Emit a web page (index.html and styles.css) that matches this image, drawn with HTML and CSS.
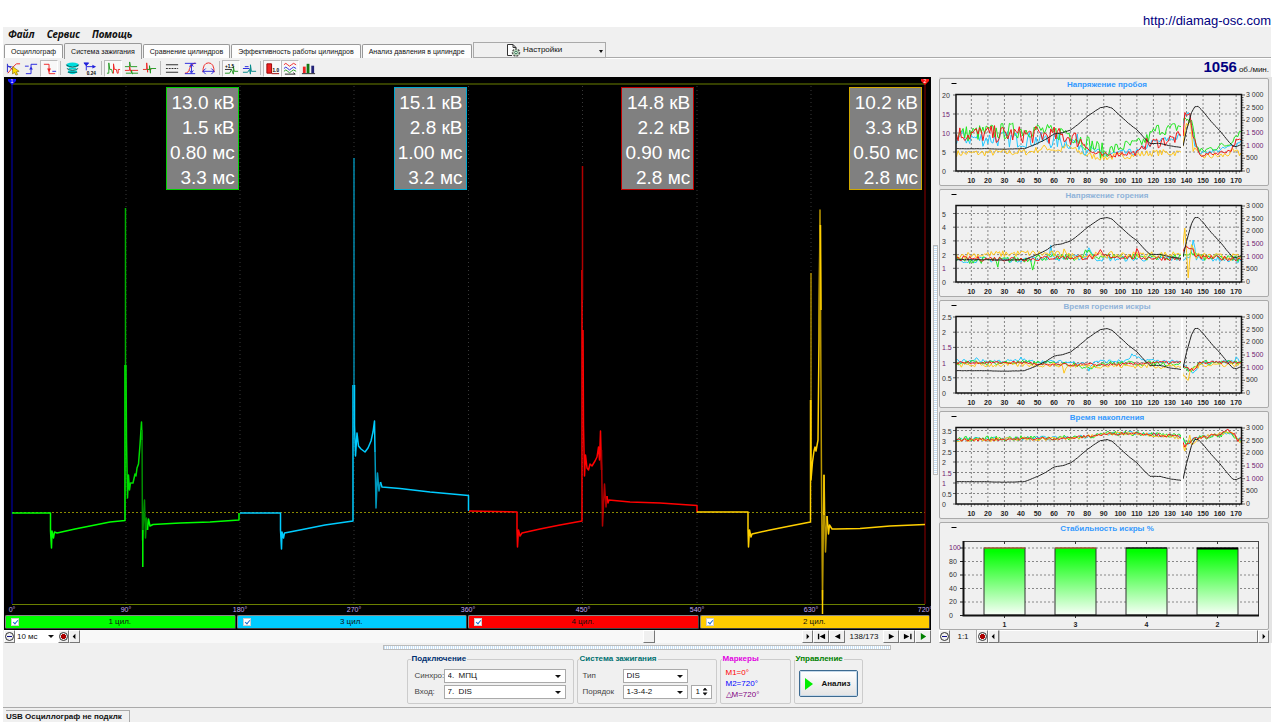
FILE: index.html
```html
<!DOCTYPE html>
<html lang="ru">
<head>
<meta charset="utf-8">
<title>Система зажигания</title>
<link rel="stylesheet" href="styles.css">
</head>
<body>
<header class="site"><a href="http://diamag-osc.com">http://diamag-osc.com</a></header>
<div class="app">
  <nav class="menubar">
    <button>Файл</button><button>Сервис</button><button>Помощь</button>
  </nav>
  <div class="tabs">
    <button class="tab">Осциллограф</button>
    <button class="tab active">Система зажигания</button>
    <button class="tab">Сравнение цилиндров</button>
    <button class="tab">Эффективность работы цилиндров</button>
    <button class="tab">Анализ давления в цилиндре</button>
    <button class="settings">
      <svg width="15" height="14" viewBox="0 0 15 14"><path d="M6 12.500H1.500V1.500H7l3 3v1M7 1.500v3h3" fill="#fff" stroke="#333"/><circle cx="10" cy="9.500" r="3.500" fill="#c8e0c8" stroke="#555" stroke-width="1.500" stroke-dasharray="2 1"/><circle cx="10" cy="9.500" r="1.300" fill="#fff" stroke="#375"/></svg>
      <span>Настройки</span><i class="caret"></i>
    </button>
    <div class="tab-rest"></div>
  </div>
  <div class="toolbar">
    <button aria-label="Маркер"><svg viewBox="0 0 16 16"><path d="M1.500 3v9M2 5l9 7M2 6h4" stroke="#22c" fill="none"/><path d="M2 13L7 7l4-4h4" stroke="#e22" fill="none"/><path d="M7 6l7 5-3 .5 1.500 3-2 .5-1.500-3-2 2z" fill="#fd0" stroke="#750" stroke-width=".6"/></svg></button>
    <button aria-label="Фронт"><svg viewBox="0 0 16 16"><path d="M2 13.500h5.500V3.500H14M1 5.500h4" stroke="#22d" fill="none"/><path d="M5.500 9h4l-2-3z" fill="#22d"/></svg></button>
    <button class="on" aria-label="Спад"><svg viewBox="0 0 16 16"><path d="M2 3.500h5.500v10H14" stroke="#e22" fill="none"/><path d="M5.500 8h4l-2 4z" fill="#e22"/><path d="M11 11h4" stroke="#22d"/></svg></button>
    <i class="sep"></i>
    <button aria-label="Масштаб"><svg viewBox="0 0 16 16"><path d="M2 3q6-3 12 0v3H2zM4 7h8v3H4zM3 12q5 4 10 0l-1-3H4z" fill="#0dd"/><path d="M1 4q7 5 14 0M2 8q6 4 12 0M3 12h10" stroke="#055" fill="none"/></svg></button>
    <button aria-label="Время"><svg viewBox="0 0 16 16"><path d="M1 2h5L3.500 5zM3.500 4v6M4 6h8" fill="#22d" stroke="#22d"/><path d="M10 4l4 2-4 2z" fill="#22d"/><text x="4" y="15" class="tiny">0.24</text></svg></button>
    <i class="sep"></i>
    <button class="on" aria-label="Парад"><svg viewBox="0 0 16 16"><path d="M1 13h2V2l1 7h2l1 4" stroke="#292" fill="none"/><path d="M7 13h1V3l1 6h2l1 4h1V9h2" stroke="#e22" fill="none"/></svg></button>
    <button aria-label="Растр"><svg viewBox="0 0 16 16"><path d="M1 6h5V1l1 5h7" stroke="#292" fill="none"/><path d="M1 10h5V6l1 5v-1h8" stroke="#e22" fill="none"/><path d="M2 13h6v-3l1 4v-1h6" stroke="#292" fill="none"/></svg></button>
    <button aria-label="Наложение"><svg viewBox="0 0 16 16"><path d="M1 9h4V2l1 10V9h4" stroke="#e22" fill="none"/><path d="M5 9h3V5l1 8V8h6" stroke="#292" fill="none"/></svg></button>
    <i class="sep"></i>
    <button aria-label="Линии"><svg viewBox="0 0 16 16"><path d="M1 4h13M1 12h13" stroke="#222"/><path d="M1 8h13" stroke="#222" stroke-dasharray="2 1"/></svg></button>
    <button aria-label="Амплитуда"><svg viewBox="0 0 16 16"><path d="M2 13Q6 13 7 8t6-6" stroke="#e22" fill="none"/><path d="M2 2.500h12M2 13.500h11" stroke="#22d"/><path d="M9 4v8M7 6l2-3 2 3M7 10l2 3 2-3" stroke="#22d" fill="none"/></svg></button>
    <button aria-label="Период"><svg viewBox="0 0 16 16"><path d="M2 12Q2 2 8 2t6 10" stroke="#e22" fill="none"/><path d="M2 11h12M5 8l-3 3 3 3M11 8l3 3-3 3" stroke="#22d" fill="none"/></svg></button>
    <i class="sep"></i>
    <button class="on" aria-label="Значения"><svg viewBox="0 0 16 16"><path d="M1 13h5l2-4 2 5V6l1 5h4" stroke="#292" fill="none"/><text x="1" y="7" class="tiny">+1.5</text><path d="M1 9h7" stroke="#222"/></svg></button>
    <button aria-label="Сдвиг"><svg viewBox="0 0 16 16"><path d="M1 12h5l2-3 1 5V4l1 7h5" stroke="#088" fill="none"/><path d="M1 8h7M3 6h4" stroke="#22d"/></svg></button>
    <i class="sep"></i>
    <button class="on" aria-label="Таблица"><svg viewBox="0 0 16 16"><path d="M2 3h5v10H2z" fill="#e22" stroke="#900"/><path d="M7 13.500h8" stroke="#900"/><text x="8" y="12" class="tiny">1.0</text></svg></button>
    <button class="on" aria-label="Графики"><svg viewBox="0 0 16 16"><path d="M1 4q2-3 4 0t4 0 5 0" stroke="#e22" fill="none"/><path d="M1 8q2-3 4 0t4 0 5 0" stroke="#22d" fill="none"/><path d="M1 11q2-3 4 0t4 0 5 0" stroke="#292" fill="none"/><path d="M2 14h11l-2-1.500" stroke="#222" fill="none"/></svg></button>
    <button aria-label="Гистограмма"><svg viewBox="0 0 16 16"><path d="M2 6h3v7H2z" fill="#e22"/><path d="M6 3h3v10H6z" fill="#117711"/><path d="M11 5h3v8h-3z" fill="#227"/><path d="M1 13.500h14" stroke="#222"/></svg></button>
    <div class="rpm"><b>1056</b><span>об./мин.</span></div>
  </div>

  <main class="work">
    <section class="scope-col">
      <div class="scope">
        <svg class="trace" viewBox="4 77 927 538">
          <g class="vgrid"><path d="M126 86V604M240 86V604M354 86V604M468.500 86V604M582.500 86V604M697 86V604M811 86V604"/></g>
          <path d="M12 84H925M12 604.500H925" stroke="#6b8000"/>
          <path d="M12 512.500H925" stroke="#8a8a00" stroke-dasharray="2 2"/>
          <path d="M12 80V604" stroke="#0000c0"/>
          <path d="M925 80V604" stroke="#900000"/>
          <path d="M8 79h8v2l-4 4-4-4z" fill="#11f"/><path d="M921 79h8v2l-4 4-4-4z" fill="#f11"/>
          <text x="12" y="83" class="mark">1</text><text x="925" y="83" class="mark">2</text>
          <g fill="none" stroke-width="1.500" stroke-linejoin="round">
            <path stroke="#0f0" d="M12 513H50.500V531L51.500 548L52 531L53.500 538L54.500 532L57 533L75 529L95 525L110 522L125 520.500V365"/>
            <path stroke="#00b000" d="M125.500 365V208"/>
            <path stroke="#0d0" d="M126 365L126.500 440L127.500 498L128.500 475L129.500 490L130.500 483L133 483L135 474L136 476L137 468L138.500 464L140 445L141.500 422L142 440"/>
            <path stroke="#008c00" d="M142 430L142.500 540L144.500 500L145.500 538L146.500 518L147.500 530"/>
            <path stroke="#0f0" d="M142.800 567V530M147.500 530L148.500 519L150 526L153 524.500L180 523L210 522L239 520V513"/>
            <path stroke="#00ccff" d="M240 513H280.500V530L281.500 549L282 532L283.500 538L284.500 533L300 530L325 525L353 521V385"/>
            <path stroke="#0088ab" d="M354 400V158"/>
            <path stroke="#00ccff" d="M354.500 385V425L355.500 456L357 433L358.500 446L361 449L365 452L368 448L371 441L373 432L374.500 421L375 452"/>
            <path stroke="#0099bd" d="M375 450L376 508L377.500 473L379 491L380.500 482"/>
            <path stroke="#00ccff" d="M380.500 482L382 487L400 488.500L430 492L468.500 495.500V511"/>
            <path stroke="#f00" d="M469 511L517 512V530L517.500 547L518.500 530L520 536L522 533L540 529L560 525L582 521V270"/>
            <path stroke="#b00000" d="M582.500 300V166"/>
            <path stroke="#f00" d="M583 330L583.500 425L584.500 476L585.500 455L587 468L588.500 470L590 464L592 466L595 461L597 457L598.500 447L599.500 460L600.500 431L601.500 470"/>
            <path stroke="#b00000" d="M601.500 450L602.500 526L604.500 484L606 507L607 496"/>
            <path stroke="#f00" d="M607 496L608 503L609 500L630 502L660 503L697 505.500V512"/>
            <path stroke="#ffd000" d="M697 512H748V530L748.500 547L749.500 530L751 537L752 534L770 530L790 526L810.500 522V400"/>
            <path stroke="#a88900" d="M811 400V273"/>
            <path stroke="#ffd000" d="M811 400V480L812.500 462L814 451L815 447L816 451L818 440L819 340L820 225"/>
            <path stroke="#b89500" d="M819 340L820 210L821.500 480L822.500 600L824 475L825.500 552L827 516"/>
            <path stroke="#ffd000" d="M822.500 590V614M820.500 225L821 310M824 475V515M827 516L828.500 534L829.500 525L832 529L836 529L860 528.500L890 526L925 524.500"/>
          </g>
          <g class="deg"><text x="12" y="612">0°</text><text x="126" y="612">90°</text><text x="240" y="612">180°</text><text x="354" y="612">270°</text><text x="468" y="612">360°</text><text x="583" y="612">450°</text><text x="697" y="612">540°</text><text x="811" y="612">630°</text><text x="925" y="612">720°</text></g>
        </svg>
        <div class="readouts">
          <div class="readout r1">13.0 кВ<br>1.5 кВ<br>0.80 мс<br>3.3 мс</div>
          <div class="readout r2">15.1 кВ<br>2.8 кВ<br>1.00 мс<br>3.2 мс</div>
          <div class="readout r3">14.8 кВ<br>2.2 кВ<br>0.90 мс<br>2.8 мс</div>
          <div class="readout r4">10.2 кВ<br>3.3 кВ<br>0.50 мс<br>2.8 мс</div>
        </div>
      </div>
      <div class="channels">
        <label class="ch b1"><input type="checkbox" checked><span>1 цил.</span></label>
        <label class="ch b2"><input type="checkbox" checked><span>3 цил.</span></label>
        <label class="ch b3"><input type="checkbox" checked><span>4 цил.</span></label>
        <label class="ch b4"><input type="checkbox" checked><span>2 цил.</span></label>
      </div>
      <div class="strip">
        <button class="sb" aria-label="Уменьшить"><i class="lens minus"></i></button>
        <span class="drop flat"><select aria-label="Развёртка"><option>10 мс</option></select></span>
        <button class="sb" aria-label="Увеличить"><i class="lens plus"></i></button>
        <button class="sb" aria-label="Влево"><svg viewBox="0 0 10 10"><path d="M6 2v6L3 5z"/></svg></button>
        <div class="track"><i class="thumb"></i></div>
        <button class="sb" aria-label="Вправо"><svg viewBox="0 0 10 10"><path d="M4 2v6l3-3z"/></svg></button>
        <button class="sb wide" aria-label="В начало"><svg viewBox="0 0 10 10"><path d="M1 2h1.500v6H1zM9 2v6L3 5z"/></svg></button>
        <button class="sb wide" aria-label="Назад"><svg viewBox="0 0 10 10"><path d="M8 2v6L2 5z"/></svg></button>
        <output>138/173</output>
        <button class="sb wide" aria-label="Вперёд"><svg viewBox="0 0 10 10"><path d="M2 2v6l6-3z"/></svg></button>
        <button class="sb wide" aria-label="В конец"><svg viewBox="0 0 10 10"><path d="M1 2v6l6-3zM8 2h1.500v6H8z"/></svg></button>
        <button class="sb wide" aria-label="Пуск"><svg viewBox="0 0 10 10"><path d="M2 1v8l6-4z" fill="#008000"/></svg></button>
      </div>
    </section>
    <div class="vsplit"><i></i></div>
    <section class="side">
      <div class="panel"><svg viewBox="940 79 328 106" id="breakdown"></svg></div>
      <div class="panel"><svg viewBox="940 79 328 106" id="burn"></svg></div>
      <div class="panel"><svg viewBox="940 79 328 106" id="burn-time"></svg></div>
      <div class="panel"><svg viewBox="940 79 328 106" id="dwell"></svg></div>
      <div class="panel"><svg viewBox="940 523 328 106" id="bars"></svg></div>
      <div class="strip">
        <button class="sb" aria-label="Уменьшить"><i class="lens minus"></i></button>
        <output class="ratio">1:1</output>
        <button class="sb" aria-label="Увеличить"><i class="lens plus"></i></button>
        <button class="sb" aria-label="Влево"><svg viewBox="0 0 10 10"><path d="M6 2v6L3 5z"/></svg></button>
        <div class="track full"></div>
        <button class="sb" aria-label="Вправо"><svg viewBox="0 0 10 10"><path d="M4 2v6l3-3z"/></svg></button>
      </div>
    </section>
  </main>

  <div class="hsplit"></div>
  <div class="groups">
    <fieldset class="g1"><legend class="navy">Подключение</legend>
      <label for="sync">Синхро:</label><span class="drop"><select id="sync"><option>4.&nbsp; МПЦ</option></select></span>
      <label for="inp">Вход:</label><span class="drop"><select id="inp"><option>7.&nbsp; DIS</option></select></span>
    </fieldset>
    <fieldset class="g2"><legend class="teal">Система зажигания</legend>
      <label for="type">Тип</label><span class="drop"><select id="type"><option>DIS</option></select></span><span></span>
      <label for="order">Порядок</label><span class="drop"><select id="order"><option>1-3-4-2</option></select></span>
      <span class="spin"><input type="text" value="1" aria-label="Номер"><i></i></span>
    </fieldset>
    <fieldset class="g3"><legend class="pink">Маркеры</legend>
      <span class="m1">М1=0°</span><span class="m2">М2=720°</span><span class="m3">△М=720°</span>
    </fieldset>
    <fieldset class="g4"><legend class="green">Управление</legend>
      <button class="run"><svg width="8" height="12" viewBox="0 0 8 12"><path d="M0 0l8 6-8 6z" fill="#0e0"/></svg>Анализ</button>
    </fieldset>
  </div>
  <footer class="status"><span>USB Осциллограф не подклк</span></footer>
</div>
<script src="charts.js"></script>
</body>
</html>
```

FILE: styles.css
```css
* { box-sizing: border-box; }
body { margin: 0; padding: 0 9px 0 3px; background: #fff; font: 8px/10px "Liberation Sans", Arial, sans-serif; color: #111; }
button, select, input { font: inherit; color: inherit; margin: 0; padding: 0; }
button { background: none; border: 0; }
.site { height: 27px; display: flex; justify-content: flex-end; align-items: flex-end; }
.site a { color: #000080; text-decoration: none; font-size: 13px; line-height: 13px; }
.app { background: #f0f0f0; }

.menubar { display: flex; gap: 12px; padding: 0 5px; height: 15px; font: italic bold 10px/15px "Noto Sans", "Open Sans", sans-serif; }
.menubar button { font: inherit; }

.tabs { display: flex; align-items: flex-end; height: 17px; padding-left: 1px; }
.tab { height: 14px; padding: 0 6px; margin-bottom: 1px; border: 1px solid #999; border-bottom: 0; border-radius: 2px 2px 0 0; background: #fdfdfd; white-space: nowrap; font-size: 7px; }
.tab + .tab { margin-left: 1px; }
.tab.active { height: 16px; margin-bottom: 0; background: #f0f0f0; }
.settings { position: relative; width: 133px; height: 16px; border: 1px solid #aaa; display: flex; align-items: center; justify-content: center; gap: 2px; margin-bottom: 1px; margin-left: 1px; padding-right: 10px; }
.settings .caret { position: absolute; right: 2px; top: 7px; border: 2px solid transparent; border-top: 3px solid #111; border-bottom: 0; }
.tab-rest { flex: 1; height: 2px; border-top: 1px solid #aaa; background: #fff; }

.toolbar { display: flex; align-items: center; height: 18px; padding: 0 2px 0 1px; }
.toolbar button { width: 18px; height: 17px; border: 1px solid transparent; display: flex; justify-content: center; align-items: center; }
.toolbar button.on { background: #f8f8f8; border-color: #bbb #fff #fff #bbb; }
.toolbar svg { width: 15px; height: 15px; }
.tiny { font-size: 5px; font-weight: bold; }
.sep { width: 1px; height: 14px; margin: 0 2px; background: #bbb; }
.rpm { margin-left: auto; display: flex; align-items: baseline; gap: 2px; font-size: 8px; line-height: 16px; }
.rpm b { font-size: 15px; color: #000080; }

.work { display: grid; grid-template-columns: 927fr 8px 333fr; padding-left: 1px; margin-right: -1px; }
.scope { position: relative; background: #000; }
.scope svg, .panel svg { display: block; width: 100%; height: auto; }
.vgrid path { stroke: #383838; stroke-dasharray: 1 3; fill: none; }
.deg { font-size: 7px; fill: #c0a8f0; text-anchor: middle; }
.mark { font-size: 5px; fill: #fff; text-anchor: middle; }
.readouts { position: absolute; inset: 10px 8px auto 8px; display: grid; grid-template-columns: repeat(4, 1fr); justify-items: end; }
.readout { width: 73px; margin-right: 1px; padding: 2px 3px 0 0; height: 103px; border: 1px solid; background: #808080; color: #fff; font-size: 19px; line-height: 25px; text-align: right; white-space: nowrap; }
.readout.r1 { border-color: #00d000; }
.readout.r2 { border-color: #00a8d0; }
.readout.r3 { border-color: #c00000; }
.readout.r4 { border-color: #d0a800; }

.channels { display: grid; grid-template-columns: repeat(4, 1fr); gap: 1px; background: #000; padding: 0 1px 1px 1px; }
.ch { height: 14px; border: 1px solid; border-color: #888 #444 #444 #888; border-radius: 2px; display: flex; align-items: center; padding-left: 5px; }
.ch span { flex: 1; text-align: center; padding-right: 14px; }
.ch input { appearance: none; width: 8px; height: 8px; background: #fff; border: 1px solid #ccc; position: relative; }
.ch input:checked::after { content: ""; position: absolute; left: 2px; top: 0; width: 2px; height: 4px; border: solid #1a70d0; border-width: 0 1px 1px 0; transform: rotate(40deg); }
.b1 { background: #0f0; }
.b2 { background: #0cf; }
.b3 { background: #f00; }
.b4 { background: #fc0; }

.strip { display: flex; height: 13px; background: #f8f8f8; }
.sb { width: 11px; border: 1px solid; border-color: #fff #777 #777 #fff; background: #f0f0f0; display: flex; align-items: center; justify-content: center; }
.sb.wide { width: 16px; }
.sb svg { width: 9px; height: 9px; }
.lens { width: 9px; height: 9px; border: 1px solid #333; border-radius: 50%; display: block; flex: none; }
.lens.minus { background: linear-gradient(#118, #118) center / 5px 1px no-repeat; }
.lens.plus { background: linear-gradient(#a00, #a00) center / 5px 3px no-repeat, linear-gradient(#a00, #a00) center / 3px 5px no-repeat; }
.track { flex: 1; background: #f8f8f8; display: flex; }
.thumb { margin-left: 78%; width: 12px; border: 1px solid; border-color: #fff #777 #777 #fff; background: #f0f0f0; }
.track.full { border: 1px solid; border-color: #fff #777 #777 #bbb; background: #f0f0f0; }
output { width: 38px; text-align: center; line-height: 13px; background: #f0f0f0; }
output.ratio { width: 27px; border-right: 1px solid #aaa; }

.drop { position: relative; display: block; background: #fff; border: 1px solid #aaa; height: 14px; }
.drop select { appearance: none; width: 100%; height: 100%; border: 0; background: none; padding-left: 3px; display: block; }
.drop::after { content: ""; position: absolute; right: 4px; top: 5px; border: 3px solid transparent; border-top-color: #111; border-bottom: 0; pointer-events: none; }
.drop.flat { width: 43px; height: 13px; border: 0; }
.drop.flat select { padding-left: 2px; }

.vsplit { display: flex; align-items: center; justify-content: center; }
.vsplit i { width: 5px; height: 230px; border: 1px solid #bbb; background: repeating-linear-gradient(#c8e0f4 0 1px, #fff 1px 2px); }
.side { padding: 1px 3px 0 0; display: flex; flex-direction: column; gap: 3px; background: #e4e4e4; }
.panel { background: #f0f0f0; border: 1px solid #aaa; border-radius: 2px; }
.side .strip { margin-top: -3px; }
.tt { font-size: 8px; font-weight: bold; fill: #3399ff; text-anchor: middle; }
.tt.dim { fill: #8fb3d9; }
.ax { font-size: 7px; fill: #333; }
.ax.one { fill: #702070; }
.xl { font-size: 7px; font-weight: bold; fill: #222; text-anchor: middle; }
.line { fill: none; stroke-width: 1; }

.hsplit { width: 40%; height: 5px; margin: 2px auto 0; border: 1px solid #bbb; background: repeating-linear-gradient(90deg, #c8e0f4 0 1px, #fff 1px 2px); }
.groups { display: flex; justify-content: center; gap: 3px; padding: 4px 5px 3px 0; border-bottom: 1px solid #aaa; }
fieldset { margin: 0; min-width: 0; border: 1px solid #ccc; border-radius: 2px; padding: 0 7px 0; height: 50px; display: grid; gap: 2px 3px; align-items: center; align-content: center; }
legend { font-weight: bold; padding: 0 1px; margin-left: -4px; white-space: nowrap; }
.g1 { width: 167px; grid-template-columns: 26px 1fr; }
.g2 { width: 140px; grid-template-columns: 37px 65px 21px; padding: 0 5px; }
.g3 { width: 71px; padding: 0 5px; gap: 1px; }
.g4 { width: 69px; padding: 0 4px; }
label { color: #444; }
label.ch { color: #111; }
.navy { color: #003070; }
.teal { color: #007070; }
.pink { color: #e000e0; }
.green { color: #008000; }
.m1 { color: #f00; }
.m2 { color: #00f; }
.m3 { color: #800080; }
.spin { position: relative; height: 14px; background: #fff; border: 1px solid #aaa; }
.spin input { width: 100%; height: 100%; border: 0; background: none; padding-left: 4px; display: block; }
.spin i { position: absolute; right: 3px; top: 2px; width: 5px; height: 8px; background: #111; clip-path: polygon(50% 0, 100% 37%, 0 37%, 0 63%, 100% 63%, 50% 100%, 0 63%, 0 37%); }
.run { height: 27px; border: 1px solid #3c6a90; border-radius: 2px; outline: 1px solid #c4d8ea; outline-offset: -2px; background: linear-gradient(#fff, #e4e4e4); font-weight: bold; display: flex; align-items: center; justify-content: center; gap: 8px; }
.status { display: flex; height: 14px; align-items: flex-end; padding-left: 3px; font-weight: bold; white-space: nowrap; }
.status span { border: solid #aaa; border-width: 1px 1px 0 0; padding: 1px 7px 0 0; }
```

FILE: charts.js
```js
(() => {
const rpm = [[1,880],[20,880],[29,860],[42,880],[46,980],[50,1090],[55,1250],[60,1460],[65,1510],[70,1620],[75,1870],[80,2150],[85,2380],[88,2500],[92,2545],[95,2480],[100,2180],[105,1880],[110,1630],[115,1270],[118,1090],[124,1090],[130,990],[137,930],[138,1000],[140,1600],[143,2300],[145,2540],[147,2550],[150,2350],[155,1950],[160,1600],[165,1200],[168,980],[170,960],[173,1040]];
const G = '#22e622', R = '#f01818', C = '#22c8ff', Y = '#ffc61a';

const charts = [
  { id: 'breakdown', title: 'Напряжение пробоя', max: 20, ticks: [0, 5, 10, 15, 20], series: [
    [Y, .9, [[1,4.6],[45,5],[55,6.2],[63,5.3],[68,6.6],[75,5],[82,4],[90,3.5],[110,4.3],[120,4.8],[137,4.8],[139,11],[142,13.5],[144,6],[148,3.8],[162,4],[168,5],[173,4.5]]],
    [C, 2.2, [[1,8.8],[60,8],[75,7.5],[80,6]]],
    [C, .9, [[80,6],[90,4.4],[110,5],[120,7.5],[130,8.5],[137,9]]],
    [C, .5, [[137,9],[139,15],[142,15],[145,7],[148,4.8],[160,5.5],[170,7],[173,8]]],
    [G, 2.2, [[1,9.7],[48,11],[60,9.8],[67,10.5],[75,8.5],[80,7.5],[90,5]]],
    [G, 1.6, [[90,5],[102,6.5],[110,7],[115,8],[122,11],[130,11],[137,12]]],
    [G, 1, [[137,12],[139,14],[143,13],[146,7],[148,5],[155,6],[165,7],[170,9.5],[173,10.5]]],
    [R, 2.3, [[1,9.8],[55,9.5],[70,9],[78,7.5]]],
    [R, .8, [[78,7.5],[82,5],[90,4],[100,4.6],[111,4.8],[115,7]]],
    [R, 1.6, [[115,7],[120,7.3],[130,8.3],[137,9]]],
    [R, .5, [[138,9.5],[139,15],[142,15],[144,9],[148,4.2],[160,4.8],[167,5.5],[170,8],[173,8]]]] },
  { id: 'burn', title: 'Напряжение горения', dim: 1, max: 5.55, ticks: [0, 1, 2, 3, 4, 5], series: [
    [C, .2, [[1,1.6],[45,1.65],[57,1.8],[58,2.5],[60,1.7],[79,1.8],[81,2.6],[84,1.7],[142,1.7],[144,3],[146,1.8],[173,1.55]]],
    [G, .25, [[1,1.6],[25,1.6],[26,1],[27,1.6],[46,1.7],[47,1.1],[49,1.8],[77,1.8],[79,2.2],[85,1.9],[140,1.8],[142,2.2],[150,1.8],[173,1.7]]],
    [Y, .25, [[1,1.95],[45,2.1],[65,2],[66,2.6],[68,1.9],[110,2],[130,2],[137,2.2],[139,3.7],[140,2],[141,.5],[143,2.7],[146,1.9],[173,1.8]]],
    [R, .18, [[1,1.7],[50,1.7],[60,1.8],[86,1.8],[88,2.3],[90,1.9],[109,1.8],[110,2.3],[112,1.8],[137,1.7],[139,2.6],[144,2.3],[146,1.8],[173,1.7]]]] },
  { id: 'burn-time', title: 'Время горения искры', dim: 1, max: 2.5, ticks: [0, .5, 1, 1.5, 2, 2.5], series: [
    [C, .06, [[1,1.05],[12,1.05],[13,1.2],[15,1.05],[38,1.05],[40,1.15],[43,1.04],[78,1],[81,.75],[84,1.04],[104,1.05],[107,1.25],[112,1.1],[137,1],[144,.6],[148,1],[169,1.04],[170,1.2],[173,1]]],
    [G, .08, [[1,1],[40,1],[75,.95],[79,.78],[88,.98],[137,.97],[142,.7],[148,1],[173,1]]],
    [Y, .08, [[1,.92],[64,.93],[66,.7],[68,.9],[137,.88],[138,.5],[141,.45],[143,.8],[150,.94],[173,.94]]],
    [R, .05, [[1,1],[45,1],[50,.92],[108,.94],[115,1],[137,1],[140,.8],[145,.75],[148,1],[173,1]]]] },
  { id: 'dwell', title: 'Время накопления', max: 3.62, ticks: [0, .5, 1, 1.5, 2, 2.5, 3, 3.5], series: [
    [C, .09, [[1,3.08],[70,3.16],[95,3.35],[110,3.38],[137,3.2],[140,2.8],[144,3.15],[160,3.3],[167,3.35],[171,3.1],[173,3.05]]],
    [G, .12, [[1,3.1],[70,3.16],[95,3.35],[112,3.38],[137,3.2],[140,2.9],[144,3.1],[160,3.3],[167,3.35],[171,3.1],[173,3.05]]],
    [Y, .09, [[1,3.05],[70,3.12],[95,3.35],[110,3.38],[137,3.15],[139,2.6],[141,2.9],[142,3.2],[143,2.9],[150,3.2],[167,3.4],[171,3.05],[173,3]]],
    [R, .07, [[1,3.05],[70,3.14],[95,3.35],[110,3.38],[137,3.2],[139,2.75],[145,3.1],[160,3.32],[165,3.5],[169,3.3],[171,3.05],[173,3.1]]]] }
];

let seed = 7;
const rand = () => (seed = (seed * 16807) % 2147483647) / 2147483647 * 2 - 1;
const at = (pts, n) => {
  for (let i = 1; i < pts.length; i++) {
    if (n <= pts[i][0]) {
      const [a, b] = [pts[i - 1], pts[i]];
      return a[1] + (b[1] - a[1]) * (n - a[0]) / (b[0] - a[0]);
    }
  }
  return pts[pts.length - 1][1];
};
const px = n => 954.8 + 1.655 * n;
const ceil = 95, floor = 171;

for (const c of charts) {
  const y = v => floor - v / c.max * (floor - ceil);
  const yr = v => floor - v / 3000 * (floor - ceil);
  const draw = (pts, noise, scale) => {
    let d = '';
    for (let n = pts[0][0]; n <= pts[pts.length - 1][0]; n++) {
      d += (d ? 'L' : 'M') + px(n).toFixed(1) + ' ' + scale(at(pts, n) + rand() * noise).toFixed(1);
    }
    return d;
  };
  let s = `<text class="tt${c.dim ? ' dim' : ''}" x="1107" y="87">${c.title}</text><path d="M951.5 83.5h5" stroke="#000"/>`;
  let grid = '', minor = '';
  for (const t of c.ticks) {
    if (t > 0 && t < c.max) grid += `M957 ${y(t).toFixed(1)}H1241`;
    minor += `M953 ${y(t).toFixed(1)}h3`;
    s += `<text class="ax${String(t)[0] === '1' ? ' one' : ''}" x="942" y="${y(t) + 3}">${t}</text>`;
  }
  for (let n = 10; n <= 170; n += 10) {
    grid += `M${px(n)} 95V171`;
    s += `<text class="xl" x="${px(n)}" y="183">${n}</text>`;
  }
  for (let n = 2; n <= 172; n += 2) minor += `M${px(n).toFixed(1)} 171v${n % 10 ? 1.5 : 3}`;
  for (let v = 0; v <= 3000; v += 100) minor += `M1242 ${yr(v).toFixed(1)}h${v % 500 ? 1.5 : 3}`;
  for (let v = 0; v <= 3000; v += 500) {
    const t = v >= 1000 ? `${v / 1000 | 0} ${String(v % 1000).padStart(3, '0')}` : v;
    s += `<text class="ax${v >= 1000 && v < 2000 ? ' one' : ''}" x="1246" y="${yr(v) + 2}">${t}</text>`;
  }
  s += `<path d="${grid}" stroke="#858585" stroke-dasharray="2 2" fill="none"/><path d="${minor}" stroke="#222" stroke-width=".7"/>`;
  for (const [color, noise, pts] of c.series) s += `<path class="line" stroke="${color}" d="${draw(pts, noise, y)}"/>`;
  s += `<path class="line" stroke="#222" d="${draw(rpm, 5, yr)}"/><path d="M1182 95V170" stroke="#fff" stroke-width="2"/>`;
  s += '<rect x="956" y="94.5" width="285.5" height="76.5" fill="none" stroke="#111" stroke-width="1.5"/>';
  document.getElementById(c.id).innerHTML = s;
}

let b = '<defs><linearGradient id="gr" x2="0" y2="1"><stop offset=".05" stop-color="#00ff00"/><stop offset="1" stop-color="#f8fff8"/></linearGradient></defs><text class="tt" x="1107" y="531">Стабильность искры %</text><path d="M951.5 527.5h5" stroke="#000"/><rect x="963.5" y="541.5" width="295" height="74" fill="none" stroke="#444"/>';
for (let v = 0; v <= 100; v += 20) {
  const y = 615.5 - v * .675;
  b += `<text class="ax${v === 100 ? ' one' : ''}" x="949" y="${y + 2}">${v}</text><path d="M960 ${y}h3" stroke="#222"/>`;
  if (v) b += `<path d="M964 ${y}H1258" stroke="#888" stroke-dasharray="2 2"/>`;
}
[['1', 0], ['3', 0], ['4', 1], ['2', 2]].forEach(([name, gap], i) => {
  const x = 984 + i * 71;
  b += `<path d="M${x + 20.5} 541v3m0 71v3" stroke="#333"/><rect x="${x}" y="548" width="41" height="67" fill="url(#gr)" stroke="#333"/>`;
  b += gap ? `<rect x="${x}" y="547.5" width="41" height="${gap}" fill="#000"/>` : `<path d="M${x} 548h41" stroke="#d06030"/>`;
  b += `<text class="xl" x="${x + 20.5}" y="627">${name}</text>`;
});
b += '<path d="M963.5 541V615.5H1259" stroke="#111" stroke-width="2" fill="none"/>';
document.getElementById('bars').innerHTML = b;
})();
```
